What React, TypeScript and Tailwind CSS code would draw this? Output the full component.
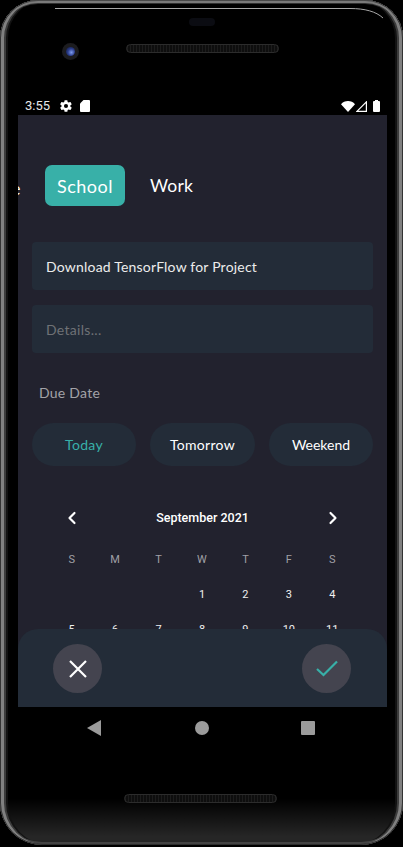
import { ChevronLeft, ChevronRight } from "lucide-react";

const weekdays = ["S", "M", "T", "W", "T", "F", "S"];
const rows = [
  ["", "", "", "1", "2", "3", "4"],
  ["5", "6", "7", "8", "9", "10", "11"],
];

function Speaker() {
  return (
    <div className="h-[9px] w-[153px] rounded-full border border-[#2c2c2c] bg-[repeating-linear-gradient(90deg,#1c1c1c_0px,#1c1c1c_1px,#0e0e0e_1px,#0e0e0e_3px)]" />
  );
}

export default function App() {
  return (
    <div className="h-[847px] w-[403px] overflow-hidden bg-black font-['Liberation_Sans',sans-serif]">
      <div className="relative h-[845px] w-[403px] rounded-t-[38px] rounded-b-[42px] bg-[linear-gradient(180deg,#000000_0%,#000000_94.5%,#262626_99%)] px-[5px] pt-[4px] shadow-[inset_1px_0_0_#333333,inset_-1px_0_0_#333333,inset_0_1px_0_#4a4a4a,inset_0_-1px_0_#2e2e2e,inset_4px_0_0_#808080,inset_-4px_0_0_#808080,inset_0_3px_0_#7a7a7a,inset_0_-3px_0_#444444,inset_6px_0_0_#3c3c3c,inset_-6px_0_0_#3c3c3c,inset_0_4px_0_#303030,inset_8px_0_0_#121212,inset_-8px_0_0_#121212]">
        <svg className="absolute left-[50px] top-[6px]" width="335" height="14" viewBox="0 0 335 14" fill="none">
          <path d="M5 2.5H300C315 2.5 326 5.5 333 12" stroke="#a8a8a8" strokeWidth="1" />
        </svg>

        <div className="flex h-[93px] flex-col">
          <div className="mx-auto mt-[14px] h-[8px] w-[26px] rounded-full bg-[#0b0c12]" />
          <div className="mt-[18px] flex items-start pl-[57px]">
            <div className="mt-[-1px] flex h-[17px] w-[17px] items-center justify-center rounded-full bg-[#1c1c1f]">
              <div className="h-[9px] w-[9px] rounded-full bg-[radial-gradient(circle_at_60%_60%,#7f9cf0_0%,#2c3f8f_45%,#0a0f2a_100%)]" />
            </div>
            <div className="ml-[47px]">
              <Speaker />
            </div>
          </div>
        </div>

        <div className="flex h-[18px] items-center justify-between pl-[20px] pr-[18px] text-white">
          <div className="flex items-center">
            <span className="font-['Roboto',sans-serif] text-[13px] text-[#e8e8e8]">3:55</span>
            <svg className="ml-[9px]" width="14" height="14" viewBox="0 0 24 24" fill="#ffffff">
              <path d="M19.4 13c.04-.33.06-.66.06-1s-.02-.67-.06-1l2.1-1.65a.5.5 0 0 0 .12-.64l-2-3.46a.5.5 0 0 0-.61-.22l-2.49 1a7.3 7.3 0 0 0-1.73-1l-.38-2.65A.49.49 0 0 0 13.93 2h-4a.49.49 0 0 0-.49.42l-.38 2.65c-.62.25-1.2.59-1.73 1l-2.49-1a.5.5 0 0 0-.61.22l-2 3.46a.49.49 0 0 0 .12.64L4.45 11c-.04.33-.07.67-.07 1s.03.67.07 1l-2.1 1.65a.5.5 0 0 0-.12.64l2 3.46c.12.22.39.3.61.22l2.49-1c.52.4 1.1.74 1.73 1l.38 2.65c.04.24.25.42.49.42h4c.24 0 .45-.18.49-.42l.38-2.65c.62-.26 1.2-.6 1.73-1l2.49 1c.22.08.49 0 .61-.22l2-3.46a.5.5 0 0 0-.12-.64zM12 15.5a3.5 3.5 0 1 1 0-7 3.5 3.5 0 0 1 0 7z" />
            </svg>
            <svg className="ml-[7px]" width="10" height="12" viewBox="0 0 10 12" fill="#ffffff">
              <path d="M3.5 0H9a1 1 0 0 1 1 1v10a1 1 0 0 1-1 1H1a1 1 0 0 1-1-1V3.5z" />
            </svg>
          </div>
          <div className="flex items-center">
            <svg width="14" height="11" viewBox="0 0 14 11" fill="#ffffff">
              <path d="M7 11 0 3.2C1.8 1.2 4.2 0 7 0s5.2 1.2 7 3.2z" />
            </svg>
            <svg className="ml-[1px]" width="11" height="11" viewBox="0 0 11 11" fill="none" stroke="#ffffff" strokeWidth="1.2">
              <path d="M10.4 .9V10.4H.9z" />
            </svg>
            <svg className="ml-[6px]" width="7" height="12" viewBox="0 0 7 12" fill="#ffffff">
              <path d="M2 0h3v1h1a1 1 0 0 1 1 1v9a1 1 0 0 1-1 1H1a1 1 0 0 1-1-1V2a1 1 0 0 1 1-1h1z" />
            </svg>
          </div>
        </div>

        <div className="relative mx-[13px] h-[592px] w-[369px] overflow-hidden bg-[#22222e] font-['Lato',sans-serif]">
          <div className="mt-[50px] flex h-[41px] items-center text-[18px] text-white">
            <div className="relative h-[41px] w-[27px] overflow-hidden">
              <span className="absolute left-[-7px] top-[10px]">e</span>
            </div>
            <div className="flex h-[41px] w-[80px] items-center justify-center rounded-[7px] bg-[#38b0a8] pt-[1px] tracking-[0.5px]">School</div>
            <div className="ml-[25px] pt-[2px] text-[17.5px] tracking-[0.2px]">Work</div>
          </div>

          <div className="mx-[14px] mt-[36px] flex h-[48px] items-center rounded-[4px] bg-[#232c38] px-[14px] text-[14px] tracking-[0.2px] text-[#ececec]">
            Download TensorFlow for Project
          </div>
          <div className="mx-[14px] mt-[15px] flex h-[48px] items-center rounded-[4px] bg-[#232c38] px-[14px] text-[14px] tracking-[0.3px] text-[#6f7276]">
            Details...
          </div>

          <div className="ml-[21px] mt-[31px] text-[14px] leading-[18px] tracking-[0.25px] text-[#a3a3a8]">Due Date</div>

          <div className="mx-[14px] mt-[21px] flex h-[43px] justify-between text-[14px] tracking-[0.3px]">
            <div className="flex w-[104px] items-center justify-center rounded-full bg-[#232c38] text-[#38b0a8]">Today</div>
            <div className="flex w-[105px] items-center justify-center rounded-full bg-[#232c38] text-white">Tomorrow</div>
            <div className="flex w-[104px] items-center justify-center rounded-full bg-[#232c38] tracking-[0px] text-white">Weekend</div>
          </div>

          <div className="mt-[41px] font-['Roboto',sans-serif]">
            <div className="flex h-[22px] items-center justify-between px-[44px] text-white">
              <ChevronLeft size={20} strokeWidth={2.6} />
              <span className="text-[12.5px] font-medium">September 2021</span>
              <ChevronRight size={20} strokeWidth={2.6} />
            </div>
            <div className="ml-[32px] mt-[24px] grid w-[304px] grid-cols-7 text-center text-[11px] leading-[14px] text-[#a0a0a6]">
              {weekdays.map((d, i) => (
                <div key={i}>{d}</div>
              ))}
            </div>
            {rows.map((r, ri) => (
              <div key={ri} className="ml-[32px] mt-[21px] grid w-[304px] grid-cols-7 text-center text-[11px] leading-[14px] text-[#f0f0f0]">
                {r.map((d, i) => (
                  <div key={i}>{d}</div>
                ))}
              </div>
            ))}
          </div>

          <div className="absolute bottom-0 left-0 flex h-[78px] w-[369px] items-start justify-between rounded-t-[20px] bg-[#232c38] pl-[35px] pr-[36px] pt-[15px]">
            <div className="flex h-[49px] w-[49px] items-center justify-center rounded-full bg-[#44444f]">
              <svg width="18" height="18" viewBox="0 0 18 18" fill="none" stroke="#ffffff" strokeWidth="2.2">
                <path d="M1 1 17 17M17 1 1 17" />
              </svg>
            </div>
            <div className="flex h-[49px] w-[49px] items-center justify-center rounded-full bg-[#44444f]">
              <svg width="22" height="17" viewBox="0 0 22 17" fill="none" stroke="#38b0a8" strokeWidth="2.2">
                <path d="M1 9 7.5 15 21 1.5" />
              </svg>
            </div>
          </div>
        </div>

        <div className="flex h-[42px] items-center">
          <svg className="ml-[82px]" width="14" height="16" viewBox="0 0 14 16" fill="#9b9b9b">
            <path d="M14 0v16L0 8z" />
          </svg>
          <div className="ml-[94px] h-[14px] w-[14px] rounded-full bg-[#9b9b9b]" />
          <div className="ml-[92px] h-[14px] w-[14px] rounded-[1px] bg-[#9b9b9b]" />
        </div>

        <div className="ml-[119px] mt-[45px]">
          <Speaker />
        </div>
      </div>
    </div>
  );
}
